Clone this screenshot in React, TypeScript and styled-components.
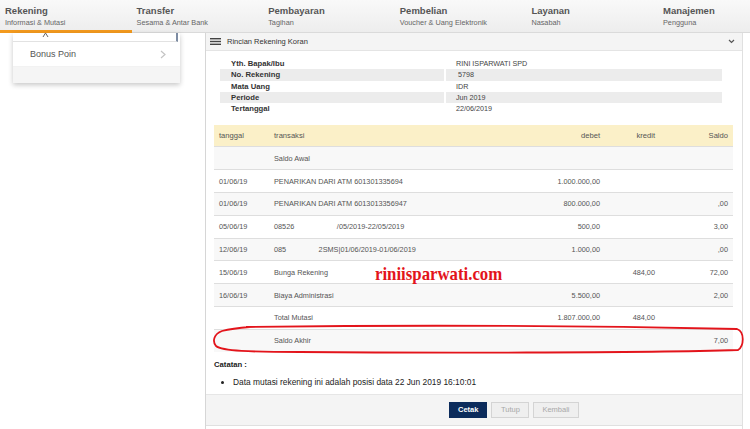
import styled, { createGlobalStyle } from 'styled-components';

const GlobalStyle = createGlobalStyle`
  html, body {
    margin: 0;
    padding: 0;
    background: #fff;
  }
  body {
    font-family: 'Liberation Sans', Arial, sans-serif;
    color: #555;
  }
`;

const menus = [
  { title: 'Rekening', sub: 'Informasi & Mutasi', active: true },
  { title: 'Transfer', sub: 'Sesama & Antar Bank' },
  { title: 'Pembayaran', sub: 'Tagihan' },
  { title: 'Pembelian', sub: 'Voucher & Uang Elektronik' },
  { title: 'Layanan', sub: 'Nasabah' },
  { title: 'Manajemen', sub: 'Pengguna' },
];

const info = [
  ['Yth. Bapak/Ibu', 'RINI ISPARWATI SPD'],
  ['No. Rekening', ' 5798'],
  ['Mata Uang', 'IDR'],
  ['Periode', 'Jun 2019'],
  ['Tertanggal', '22/06/2019'],
];

const rows = [
  { date: '', desc: 'Saldo Awal', debet: '', kredit: '', saldo: '' },
  { date: '01/06/19', desc: 'PENARIKAN DARI ATM 601301335694', debet: '1.000.000,00', kredit: '', saldo: '' },
  { date: '01/06/19', desc: 'PENARIKAN DARI ATM 6013013356947', debet: '800.000,00', kredit: '', saldo: ',00' },
  { date: '05/06/19', desc: '08526\u00a0\u00a0\u00a0\u00a0\u00a0\u00a0\u00a0\u00a0\u00a0\u00a0\u00a0\u00a0\u00a0\u00a0\u00a0\u00a0\u00a0\u00a0\u00a0\u00a0\u00a0/05/2019-22/05/2019', debet: '500,00', kredit: '', saldo: '3,00' },
  { date: '12/06/19', desc: '085\u00a0\u00a0\u00a0\u00a0\u00a0\u00a0\u00a0\u00a0\u00a0\u00a0\u00a0\u00a0\u00a0\u00a0\u00a0\u00a02SMS|01/06/2019-01/06/2019', debet: '1.000,00', kredit: '', saldo: ',00' },
  { date: '15/06/19', desc: 'Bunga Rekening', debet: '', kredit: '484,00', saldo: '72,00' },
  { date: '16/06/19', desc: 'Biaya Administrasi', debet: '5.500,00', kredit: '', saldo: '2,00' },
  { date: '', desc: 'Total Mutasi', debet: '1.807.000,00', kredit: '484,00', saldo: '' },
  { date: '', desc: 'Saldo Akhir', debet: '', kredit: '', saldo: '7,00' },
];

const App = () => {
  return (
    <Page>
      <GlobalStyle />
      <TopNav>
        {menus.map((m) => (
          <NavItem key={m.title} $active={m.active}>
            <NavTitle>{m.title}</NavTitle>
            <NavSub>{m.sub}</NavSub>
          </NavItem>
        ))}
      </TopNav>

      <Body>
        <Side>
          <MenuCard>
            <MenuTop>
              <svg width="7" height="4" viewBox="0 0 7 4">
                <path d="M1 4 L3.5 0 L6 4" fill="none" stroke="#666" strokeWidth="1" />
              </svg>
            </MenuTop>
            <MenuItem>
              <span>Bonus Poin</span>
              <svg width="6" height="9" viewBox="0 0 6 9">
                <path d="M1 1 L5 4.5 L1 8" fill="none" stroke="#c4c4c4" strokeWidth="1.2" />
              </svg>
            </MenuItem>
            <MenuFoot />
          </MenuCard>
        </Side>

        <Main>
          <PanelHead>
            <HeadTitle>
              <svg width="11" height="7" viewBox="0 0 11 7">
                <rect x="0" y="0" width="11" height="1.4" fill="#444" />
                <rect x="0" y="2.8" width="11" height="1.4" fill="#444" />
                <rect x="0" y="5.6" width="11" height="1.4" fill="#444" />
              </svg>
              <span>Rincian Rekening Koran</span>
            </HeadTitle>
            <svg width="7" height="5" viewBox="0 0 7 5">
              <path d="M1 1 L3.5 3.5 L6 1" fill="none" stroke="#555" strokeWidth="1.2" />
            </svg>
          </PanelHead>

          <InfoTable>
            {info.map(([label, value], i) => (
              <InfoRow key={label} $shade={i % 2 === 1}>
                <InfoLabel>{label}</InfoLabel>
                <InfoValue>{value}</InfoValue>
              </InfoRow>
            ))}
          </InfoTable>

          <TxTable>
            <thead>
              <tr>
                <Th style={{ width: 45 }}>tanggal</Th>
                <Th>transaksi</Th>
                <Th $right style={{ width: 95 }}>debet</Th>
                <Th $right style={{ width: 45 }}>kredit</Th>
                <Th $right style={{ width: 63 }}>Saldo</Th>
              </tr>
            </thead>
            <tbody>
              {rows.map((r, i) => (
                <Tr key={i} $shade={i % 2 === 0}>
                  <Td>{r.date}</Td>
                  <Td>{r.desc}</Td>
                  <Td $right>{r.debet}</Td>
                  <Td $right>{r.kredit}</Td>
                  <Td $right>{r.saldo}</Td>
                </Tr>
              ))}
            </tbody>
          </TxTable>

          <Notes>
            <NotesTitle>Catatan :</NotesTitle>
            <NotesList>
              <li>Data mutasi rekening ini adalah posisi data 22 Jun 2019 16:10:01</li>
            </NotesList>
          </Notes>

          <Footer>
            <Button $primary>Cetak</Button>
            <Button>Tutup</Button>
            <Button>Kembali</Button>
          </Footer>
        </Main>
        <RightGap />
      </Body>

      <Watermark>riniisparwati.com</Watermark>
      <Annotation width="750" height="429" viewBox="0 0 750 429">
        <path
          d="M246 327 C 400 325, 600 326, 737 329 C 745 332, 744 346, 738 350 C 640 353, 420 353, 300 352 C 250 352, 222 351, 216 346 C 212 341, 214 334, 222 331 C 230 329, 238 328, 250 327"
          fill="none"
          stroke="#e3141b"
          strokeWidth="1.8"
        />
      </Annotation>
    </Page>
  );
};

const Page = styled.div`
  position: relative;
  width: 750px;
  height: 429px;
  overflow: hidden;
  display: flex;
  flex-direction: column;
`;

const TopNav = styled.div`
  display: flex;
  height: 33px;
  flex: none;
  box-sizing: border-box;
  background: linear-gradient(#f9f9f9, #ededed);
  border-bottom: 1px solid #dadada;
`;

const NavItem = styled.div<{ $active?: boolean }>`
  flex: 0 0 131.6px;
  box-sizing: border-box;
  padding: 5px 0 0 5px;
  border-bottom: 3px solid ${(p) => (p.$active ? '#f39a1e' : 'transparent')};
  margin-bottom: -1px;
`;

const NavTitle = styled.div`
  font-size: 9.5px;
  font-weight: bold;
  color: #555;
  line-height: 11px;
`;

const NavSub = styled.div`
  font-size: 7.3px;
  color: #666;
  line-height: 9px;
  margin-top: 2px;
`;

const Body = styled.div`
  flex: 1;
  display: flex;
  min-height: 0;
`;

const Side = styled.div`
  flex: 0 0 205px;
`;

const MenuCard = styled.div`
  margin-left: 13px;
  width: 167px;
  background: #fff;
  box-shadow: 0 2px 5px rgba(0, 0, 0, 0.22);
`;

const MenuTop = styled.div`
  height: 9px;
  box-sizing: border-box;
  border-bottom: 1px solid #e2e2e2;
  border-right: 2px solid #7d8ca3;
  margin-right: 2px;
  padding-left: 29px;
  display: flex;
  align-items: flex-start;
`;

const MenuItem = styled.div`
  height: 24px;
  display: flex;
  align-items: center;
  justify-content: space-between;
  padding: 0 14px 0 17px;
  font-size: 9px;
  color: #555;
  border-bottom: 1px solid #f2f2f2;
`;

const MenuFoot = styled.div`
  height: 16px;
  background: #f5f5f5;
`;

const Main = styled.div`
  flex: 0 0 537px;
  box-sizing: border-box;
  border-left: 1px solid #d6d6d6;
  border-right: 1px solid #e0e0e0;
  display: flex;
  flex-direction: column;
`;

const RightGap = styled.div`
  flex: 1;
`;

const PanelHead = styled.div`
  height: 17px;
  flex: none;
  display: flex;
  align-items: center;
  justify-content: space-between;
  padding: 0 7px 0 4px;
  background: #f4f4f4;
  border-bottom: 1px solid #e4e4e4;
`;

const HeadTitle = styled.div`
  display: flex;
  align-items: center;
  gap: 6px;
  font-size: 7.5px;
  color: #333;
`;

const InfoTable = styled.div`
  margin: 7px 20px 0 14px;
  display: flex;
  flex-direction: column;
`;

const InfoRow = styled.div<{ $shade?: boolean }>`
  display: grid;
  grid-template-columns: 224px 1fr;
  column-gap: 2px;
  height: 11.3px;
  & > div {
    background: ${(p) => (p.$shade ? '#ececec' : 'transparent')};
  }
`;

const InfoLabel = styled.div`
  padding-left: 11px;
  font-size: 7.7px;
  font-weight: bold;
  color: #333;
  line-height: 11.3px;
`;

const InfoValue = styled.div`
  padding-left: 10px;
  font-size: 7.2px;
  color: #444;
  line-height: 11.3px;
  white-space: pre;
`;

const TxTable = styled.table`
  margin: 11px 9px 0 8px;
  width: 519px;
  border-collapse: collapse;
  table-layout: fixed;
  font-size: 7.3px;
  color: #555;
`;

const Th = styled.th<{ $right?: boolean }>`
  height: 21px;
  padding: 0 5px;
  background: #fbf0c8;
  font-weight: normal;
  font-size: 7.6px;
  text-align: ${(p) => (p.$right ? 'right' : 'left')};
  color: #555;
`;

const Tr = styled.tr<{ $shade?: boolean }>`
  background: ${(p) => (p.$shade ? '#f8f8f8' : '#fff')};
  border-top: 1px solid #dedede;
`;

const Td = styled.td<{ $right?: boolean }>`
  height: 21.8px;
  padding: 0 5px;
  text-align: ${(p) => (p.$right ? 'right' : 'left')};
  white-space: nowrap;
  overflow: hidden;
`;

const Notes = styled.div`
  padding: 8px 8px 0;
`;

const NotesTitle = styled.div`
  font-size: 7.7px;
  font-weight: bold;
  color: #222;
`;

const NotesList = styled.ul`
  margin: 8px 0 0;
  padding-left: 19px;
  font-size: 8.4px;
  color: #222;
`;

const Footer = styled.div`
  margin-top: 7px;
  height: 30px;
  display: flex;
  align-items: center;
  gap: 4px;
  padding-left: 243px;
  background: #f4f4f4;
  border-top: 1px solid #e6e6e6;
  border-bottom: 1px solid #e0e0e0;
`;

const Button = styled.div<{ $primary?: boolean }>`
  height: 16px;
  padding: 0 8px;
  min-width: 38px;
  display: flex;
  align-items: center;
  justify-content: center;
  font-size: 7.5px;
  box-sizing: border-box;
  background: ${(p) => (p.$primary ? '#0c2c5c' : '#efefef')};
  color: ${(p) => (p.$primary ? '#fff' : '#a8a8a8')};
  font-weight: ${(p) => (p.$primary ? 'bold' : 'normal')};
  border: 1px solid ${(p) => (p.$primary ? '#0c2c5c' : '#d4d4d4')};
`;

const Watermark = styled.div`
  position: absolute;
  left: 375px;
  top: 263px;
  font-family: 'Liberation Serif', 'Times New Roman', serif;
  font-weight: bold;
  font-size: 16.8px;
  color: #e3141b;
  transform: scaleY(1.15);
  transform-origin: left top;
`;

const Annotation = styled.svg`
  position: absolute;
  left: 0;
  top: 0;
  pointer-events: none;
`;

export default App;
